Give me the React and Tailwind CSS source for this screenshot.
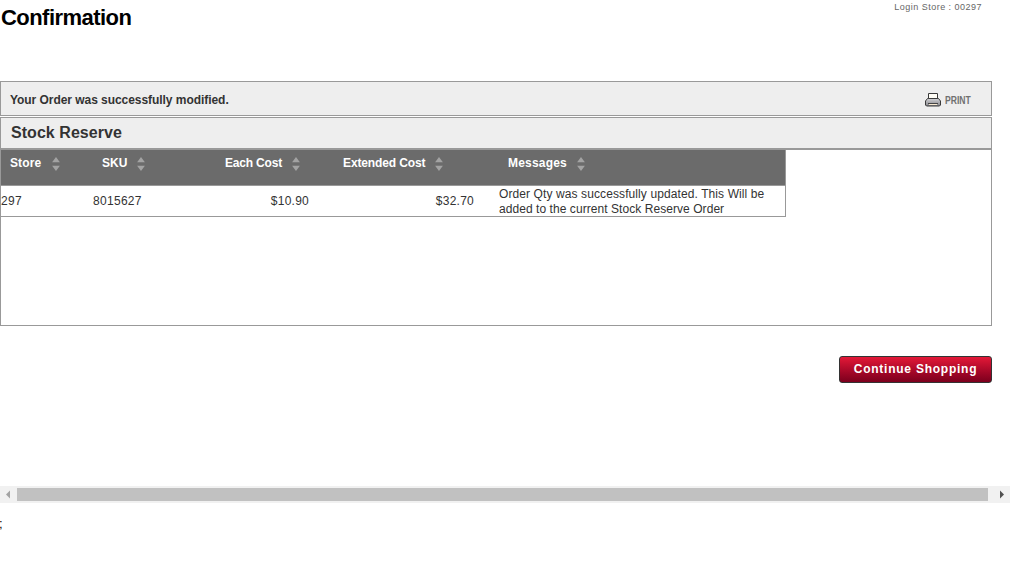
import React from "react";

function SortIcon({ className = "" }) {
  return (
    <svg className={`block h-3.5 w-2 shrink-0 ${className}`} viewBox="0 0 8 14" aria-hidden="true">
      <path d="M4 0L7.900 5.300H0.100z M0.100 8.700H7.900L4 14z" fill="#a3a3a3" />
    </svg>
  );
}

function PrintIcon() {
  return (
    <svg className="block h-3.5 w-4" viewBox="0 0 16 14" aria-hidden="true">
      <defs>
        <linearGradient id="printer" x1="0" y1="0" x2="0" y2="1">
          <stop offset="0" stopColor="#d2d2d6" />
          <stop offset="1" stopColor="#85858a" />
        </linearGradient>
      </defs>
      <path d="M2.500 5.500h11l2 2.500v4l-1 1h-13l-1-1V8z" fill="url(#printer)" stroke="#3a3a3a" />
      <path d="M3.500 5.500V0.500h9v5z" fill="#fffdf6" stroke="#3a3a3a" />
      <path d="M3 10.500h10" stroke="#444" />
      <path d="M4 11.500h8" stroke="#f7e8cf" />
    </svg>
  );
}

function HeaderCell({ label, width, spacing, gap }) {
  return (
    <div className={`flex h-[35px] items-start pt-[5px] pl-[9px] ${width}`}>
      <span className={`text-[12px] leading-4 font-bold whitespace-nowrap text-white ${spacing}`}>{label}</span>
      <SortIcon className={`mt-[2px] ${gap}`} />
    </div>
  );
}

export default function App() {
  return (
    <div className="h-[567px] w-[1030px] overflow-hidden bg-white font-['Liberation_Sans',Arial,sans-serif] text-[12px] text-[#333]">
      <header className="flex h-[81px] w-[992px] justify-between">
        <h1 className="pt-[5px] pl-px text-[22px] leading-[25px] font-bold tracking-[-0.55px] text-black">Confirmation</h1>
        <p className="mr-2.5 pt-px text-[9px] leading-3 tracking-[0.48px] whitespace-nowrap text-[#666]">Login Store : 00297</p>
      </header>

      <section className="flex h-[35px] w-[992px] items-center justify-between border border-[#999] bg-[#eee] pr-5 pl-[9px]">
        <p className="pt-0.5 text-[12px] leading-4 font-bold tracking-[-0.05px]">Your Order was successfully modified.</p>
        <button className="flex items-center gap-1 pt-0.5">
          <PrintIcon />
          <span className="w-[26px] origin-left scale-x-[0.78] pt-px text-[11px] leading-3 font-bold text-[#707070]">PRINT</span>
        </button>
      </section>

      <section className="mt-px h-[209px] w-[992px] border border-[#999]">
        <h2 className="h-8 border-b-2 border-[#999] bg-[#eee] pt-[5px] pl-2.5 text-[16px] leading-[19px] font-bold tracking-[0.05px]">
          Stock Reserve
        </h2>
        <div className="w-[785px] border-r border-b border-[#999]">
          <div className="flex border-b border-[#999] bg-[#6b6b6b]">
            <HeaderCell label="Store" width="w-[92px]" spacing="tracking-[0.1px]" gap="ml-[10.500px]" />
            <HeaderCell label="SKU" width="w-[123px]" spacing="tracking-normal" gap="ml-[9.500px]" />
            <HeaderCell label="Each Cost" width="w-[118px]" spacing="tracking-[-0.18px]" gap="ml-2.5" />
            <HeaderCell label="Extended Cost" width="w-[165px]" spacing="tracking-[-0.12px]" gap="ml-2.5" />
            <HeaderCell label="Messages" width="w-[286px]" spacing="tracking-[0.2px]" gap="ml-2.5" />
          </div>
          <div className="flex h-[30px] items-center text-[12px] leading-[15px]">
            <span className="w-[92px] tracking-[0.3px]">297</span>
            <span className="w-[123px] tracking-[0.3px]">8015627</span>
            <span className="w-[93px] text-right tracking-[0.25px]">$10.90</span>
            <span className="w-[165px] text-right tracking-[0.25px]">$32.70</span>
            <span className="ml-[25px] pt-0.5 whitespace-nowrap">
              <span className="block tracking-[0.1px]">Order Qty was successfully updated. This Will be</span>
              <span className="block tracking-[0.06px]">added to the current Stock Reserve Order</span>
            </span>
          </div>
        </div>
      </section>

      <div className="flex h-40 w-[992px] items-start justify-end pt-[30px]">
        <button className="h-[27px] w-[153px] rounded-[3px] border border-[#333] bg-linear-to-b from-[#e31837] to-[#7c001d] text-[12px] leading-[25px] font-bold tracking-[0.76px] whitespace-nowrap text-white">
          Continue Shopping
        </button>
      </div>

      <div className="flex h-[17px] w-[1010px] items-center bg-[#f1f1f1]">
        <svg className="block h-[17px] w-[17px]" viewBox="0 0 17 17" aria-hidden="true">
          <path d="M10 4.500v8L6 8.500z" fill="#a3a3a3" />
        </svg>
        <div className="h-[13px] w-[971px] bg-[#c1c1c1]" />
        <svg className="ml-[5px] block h-[17px] w-[17px]" viewBox="0 0 17 17" aria-hidden="true">
          <path d="M7 4.500v8l4-4z" fill="#505050" />
        </svg>
      </div>
      <p className="-ml-px pt-[13px] text-[13px] leading-[15px] text-black">;</p>
    </div>
  );
}
